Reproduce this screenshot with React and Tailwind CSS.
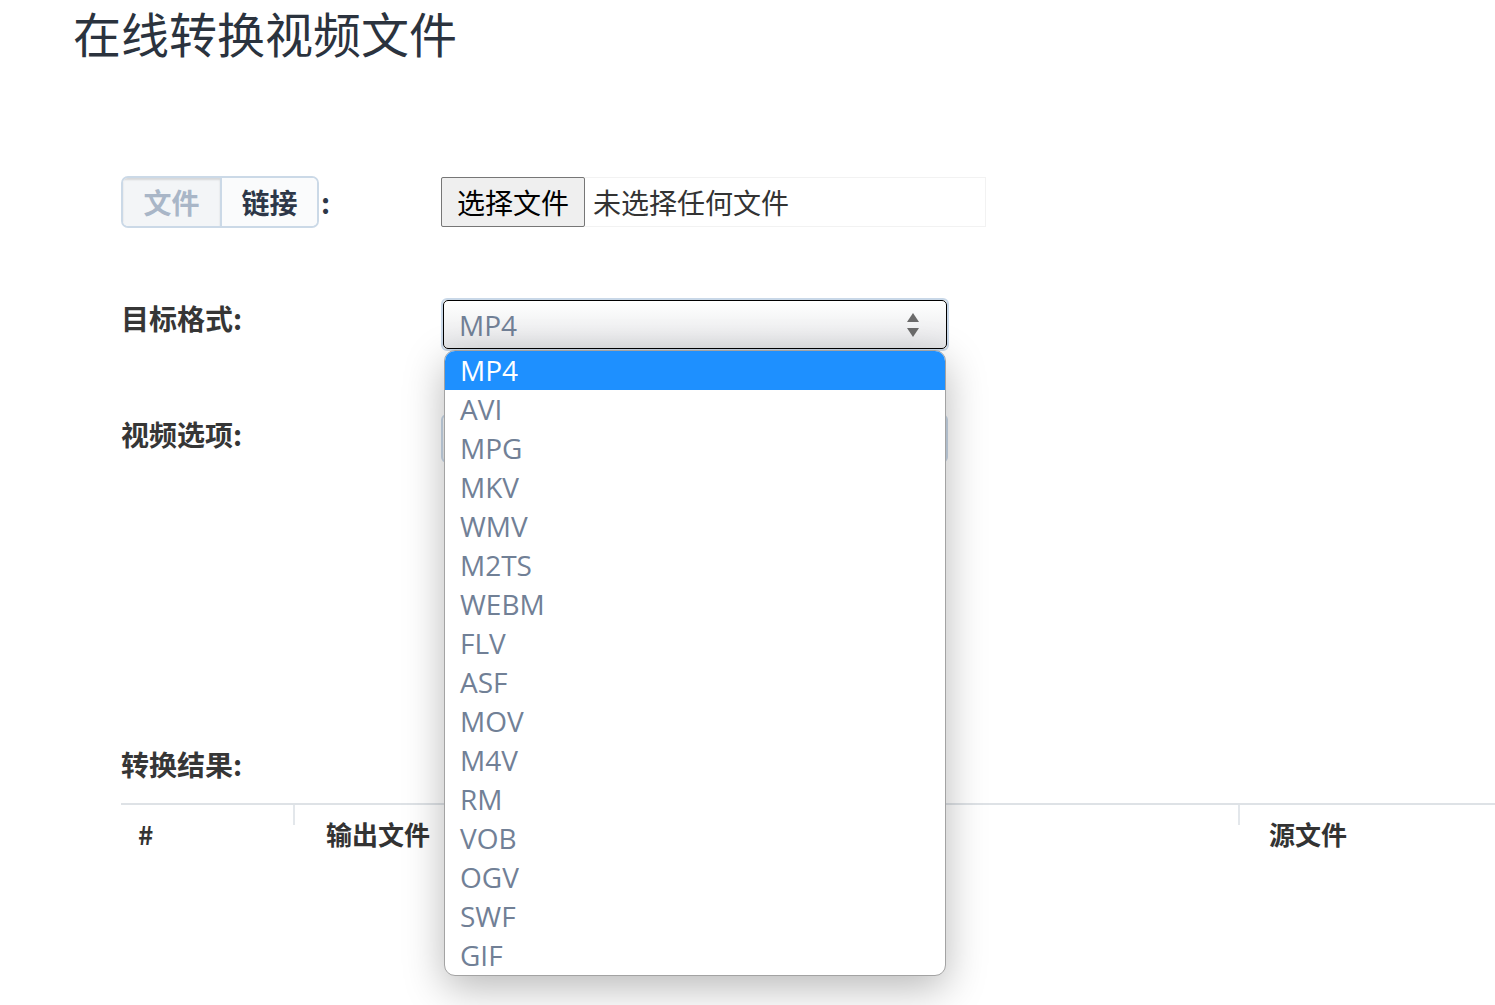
import React from "react";

const cjk = { fontFamily: '"Noto Sans CJK SC", sans-serif' };
const latin = { fontFamily: '"Open Sans", "Noto Sans CJK SC", sans-serif' };

const formats = [
  "MP4",
  "AVI",
  "MPG",
  "MKV",
  "WMV",
  "M2TS",
  "WEBM",
  "FLV",
  "ASF",
  "MOV",
  "M4V",
  "RM",
  "VOB",
  "OGV",
  "SWF",
  "GIF",
];

const labelClass = "w-[320px] shrink-0 text-[28px] font-bold text-[#363636] leading-[40px]";

function SortArrows() {
  return (
    <svg width="14" height="28" viewBox="0 0 14 28" className="text-[#6b6b6b]">
      <path d="M7 2 L13 11 L1 11 Z" fill="currentColor" />
      <path d="M7 26 L13 17 L1 17 Z" fill="currentColor" />
    </svg>
  );
}

function FormatSelect() {
  return (
    <div className="relative w-[508px] h-[53px] rounded-[6px] border-2 border-[#c9d8e8]">
      <div className="flex items-center justify-between h-full rounded-[5px] border border-black bg-gradient-to-b from-white to-[#e6e7e9] pl-[15px] pr-[26px]">
        <span className="text-[28px] text-[#718096] leading-none" style={latin}>
          MP4
        </span>
        <SortArrows />
      </div>

      <div className="absolute left-[1px] top-[50px] z-10 w-[502px] rounded-[11px] border border-[#a3a3a3] bg-white shadow-[0_12px_40px_rgba(0,0,0,0.28)] overflow-hidden">
        {formats.map((f, i) => (
          <div
            key={f}
            className={
              i === 0
                ? "h-[39px] pl-[15px] text-[28px] leading-[39px] bg-[#1e90ff] text-white"
                : "h-[39px] pl-[15px] text-[28px] leading-[39px] text-[#718096]"
            }
            style={latin}
          >
            {f}
          </div>
        ))}
      </div>
    </div>
  );
}

export default function App() {
  return (
    <div className="w-full min-h-screen bg-white overflow-hidden" style={cjk}>
      <h1 className="pl-[73px] pt-[2px] text-[48px] leading-[60px] font-normal text-[#2b333e]">
        在线转换视频文件
      </h1>

      <div className="pl-[121px]">
        <div className="flex items-center mt-[114px]">
          <div className="w-[320px] shrink-0 flex items-center">
            <div className="flex h-[52px] rounded-[7px] border-2 border-[#cbd9e7] overflow-hidden">
              <div className="w-[97px] flex items-center justify-center bg-[#f3f5f7] text-[28px] font-bold text-[#a9b6c7] shadow-[inset_0_2px_2px_rgba(0,0,0,0.12)]">
                文件
              </div>
              <div className="w-[97px] flex items-center justify-center border-l-2 border-[#cbd9e7] bg-[#fafbfc] text-[28px] font-bold text-[#2d3748]">
                链接
              </div>
            </div>
            <span className="ml-[2px] text-[28px] font-bold text-[#2d3748]">:</span>
          </div>

          <div className="flex items-center h-[50px] w-[545px] border border-[#f2f2f2]">
            <div className="h-[50px] px-[15px] flex items-center rounded-[2px] border border-[#767676] bg-[#efefef] text-[28px] text-black -ml-px -my-px">
              选择文件
            </div>
            <span className="ml-[8px] text-[28px] text-[#333]">未选择任何文件</span>
          </div>
        </div>

        <div className="flex items-start mt-[70px]">
          <div className={labelClass}>目标格式:</div>
          <FormatSelect />
        </div>

        <div className="flex items-start mt-[63px]">
          <div className={labelClass}>视频选项:</div>
          <div className="w-[507px] h-[49px] rounded-[6px] border-2 border-[#c9d8e8] bg-gradient-to-b from-white to-[#eef0f2]" />
        </div>

        <div className="mt-[281px]">
          <div className="text-[28px] font-bold text-[#363636] leading-[40px]">转换结果:</div>
        </div>

        <div className="mt-[19px] w-[1500px] border-t-2 border-[#dee2e6]">
          <div className="flex text-[26px] font-bold text-[#333]">
            <div className="w-[174px] pl-[17px] pt-[9px] h-[60px] leading-[40px] border-r-2 border-[#e3e7eb] [border-image:linear-gradient(to_bottom,#e3e7eb_0,#e3e7eb_20px,transparent_20px)_1]">
              #
            </div>
            <div className="w-[943px] pl-[31px] pt-[9px] leading-[40px]">输出文件</div>
            <div className="flex-1 pl-[29px] pt-[9px] leading-[40px] border-l-2 border-[#e3e7eb] [border-image:linear-gradient(to_bottom,#e3e7eb_0,#e3e7eb_20px,transparent_20px)_1]">
              源文件
            </div>
          </div>
        </div>
      </div>
    </div>
  );
}
